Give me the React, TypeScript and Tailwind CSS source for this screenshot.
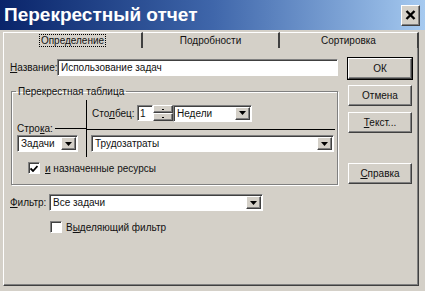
import React from 'react';

const sunken =
  'border border-t-[#808080] border-l-[#808080] border-b-white border-r-white shadow-[inset_1px_1px_0_#404040] bg-white';
const raised =
  'border border-t-white border-l-white border-b-[#404040] border-r-[#404040] shadow-[inset_-1px_-1px_0_#808080] bg-[#d4d0c8]';

const Arrow: React.FC = () => (
  <svg width="7" height="4" viewBox="0 0 7 4">
    <path d="M0 0h7L3.5 4z" fill="#000" />
  </svg>
);

const Combo: React.FC<{ value: string; className?: string }> = ({ value, className }) => (
  <div className={`flex h-[17px] p-[1px] ${sunken} ${className ?? ''}`}>
    <div className="flex-1 flex items-center pl-[2px] whitespace-nowrap overflow-hidden">{value}</div>
    <div className={`w-[15px] flex items-center justify-center ${raised}`}>
      <Arrow />
    </div>
  </div>
);

const Check: React.FC<{ checked?: boolean }> = ({ checked }) => (
  <div className={`w-[12px] h-[12px] flex items-center justify-center ${sunken}`}>
    {checked && (
      <svg width="8" height="7" viewBox="0 0 8 7">
        <path d="M0.5 3.5L3 6L7.5 1" stroke="#000" strokeWidth="1.8" fill="none" />
      </svg>
    )}
  </div>
);

const Btn: React.FC<{ children: React.ReactNode; isDefault?: boolean }> = ({ children, isDefault }) => (
  <div
    className={`h-[21px] flex items-center justify-center ${raised} ${
      isDefault ? 'outline outline-1 outline-black' : ''
    }`}
  >
    {children}
  </div>
);

const U: React.FC<{ children: React.ReactNode }> = ({ children }) => (
  <span className="underline underline-offset-[1px]">{children}</span>
);

export default function App() {
  return (
    <div className="w-[425px] h-[291px] bg-[#d4d0c8] overflow-hidden flex flex-col font-['Liberation_Sans',Arial,sans-serif] text-[10px] leading-[13px] text-[#111]">
      {/* Title bar */}
      <div className="h-[30px] shrink-0 flex items-center justify-between pl-[4px] pr-[5px] bg-gradient-to-r from-[#0a246a] via-[#3f66aa] to-[#a6caf0]">
        <span className="text-white font-bold text-[19px] leading-[22px]">Перекрестный отчет</span>
        <div className={`w-[19px] h-[21px] flex items-center justify-center ${raised}`}>
          <svg width="11" height="10" viewBox="0 0 11 10">
            <path d="M1.5 1L9.5 9M9.5 1L1.5 9" stroke="#000" strokeWidth="2.4" />
          </svg>
        </div>
      </div>

      <div className="flex-1 flex flex-col pl-[3px] pr-[6px] pb-[5px]">
        {/* Tabs */}
        <div className="h-[16px] mt-[2px] flex">
          <div className="w-[140px] flex items-center justify-center border-t border-l border-white border-r-2 border-r-[#404040]">
            <span className="border border-dotted border-black px-[1px] leading-[11px]">Определение</span>
          </div>
          <div className="w-[137px] flex items-center justify-center border-t border-white border-r-2 border-r-[#404040]">
            Подробности
          </div>
          <div className="flex-1 flex items-center justify-center border-t border-white border-r-2 border-r-[#404040]">
            Сортировка
          </div>
        </div>

        {/* Panel */}
        <div className="flex-1 flex items-start border-l border-l-white border-r border-r-[#404040] border-b border-b-[#404040] shadow-[inset_-1px_-1px_0_#808080]">
          {/* Left column */}
          <div className="w-[328px] ml-[6px] mt-[11px] flex flex-col">
            <div className="h-[17px] flex items-center">
              <span className="w-[47px]">
                <U>Н</U>азвание:
              </span>
              <div className={`flex-1 h-[17px] flex items-center pl-[3px] ${sunken}`}>Использование задач</div>
            </div>

            <fieldset className="mt-[9px] ml-[1px] border border-[#808080] shadow-[inset_1px_1px_0_white,1px_1px_0_white]">
              <legend className="ml-[4px] px-[2px]">Перекрестная таблица</legend>
              <div className="flex h-[57px] mt-[2px]">
                <div className="w-[74px] flex flex-col pt-[22px] pl-[5px]">
                  <div className="h-[13px] flex items-center">
                    <span>
                      Стро<U>к</U>а:
                    </span>
                    <div className="flex-1 h-[1px] bg-black ml-[2px]" />
                  </div>
                  <Combo value="Задачи" className="w-[61px]" />
                </div>
                <div className="w-[1px] bg-black" />
                <div className="flex-1 flex flex-col pt-[5px]">
                  <div className="h-[16px] flex items-center pl-[5px]">
                    <span className="w-[45px]">
                      Сто<U>л</U>бец:
                    </span>
                    <div className={`w-[16px] h-[16px] flex items-center pl-[2px] ${sunken}`}>1</div>
                    <div className="w-[20px] h-[16px] flex flex-col">
                      <div className={`flex-1 flex items-center justify-center ${raised}`}>
                        <div className="w-[2px] h-[1px] bg-black" />
                      </div>
                      <div className={`flex-1 flex items-center justify-center ${raised}`}>
                        <div className="w-[2px] h-[1px] bg-black" />
                      </div>
                    </div>
                    <Combo value="Недели" className="w-[79px] h-[16px]" />
                  </div>
                  <div className="h-[1px] bg-black mt-[8px] mr-[2px]" />
                  <Combo value="Трудозатраты" className="mt-[5px] ml-[4px] mr-[3px]" />
                </div>
              </div>
              <div className="h-[12px] mt-[5px] mb-[10px] flex items-center pl-[16px] gap-[5px]">
                <Check checked />
                <span>
                  <U>и</U> назначенные ресурсы
                </span>
              </div>
            </fieldset>

            <div className="h-[17px] mt-[9px] flex items-center">
              <span className="w-[39px]">
                <U>Ф</U>ильтр:
              </span>
              <Combo value="Все задачи" className="w-[214px]" />
            </div>
            <div className="h-[12px] mt-[10px] flex items-center pl-[40px] gap-[4px]">
              <Check />
              <span>
                В<U>ы</U>деляющий фильтр
              </span>
            </div>
          </div>

          {/* Right column buttons */}
          <div className="w-[64px] ml-[10px] mt-[10px] flex flex-col">
            <Btn isDefault>ОК</Btn>
            <div className="mt-[6px]">
              <Btn>Отмена</Btn>
            </div>
            <div className="mt-[6px]">
              <Btn>
                <span>
                  <U>Т</U>екст...
                </span>
              </Btn>
            </div>
            <div className="mt-[30px]">
              <Btn>
                <span>
                  <U>С</U>правка
                </span>
              </Btn>
            </div>
          </div>
        </div>
      </div>
    </div>
  );
}
